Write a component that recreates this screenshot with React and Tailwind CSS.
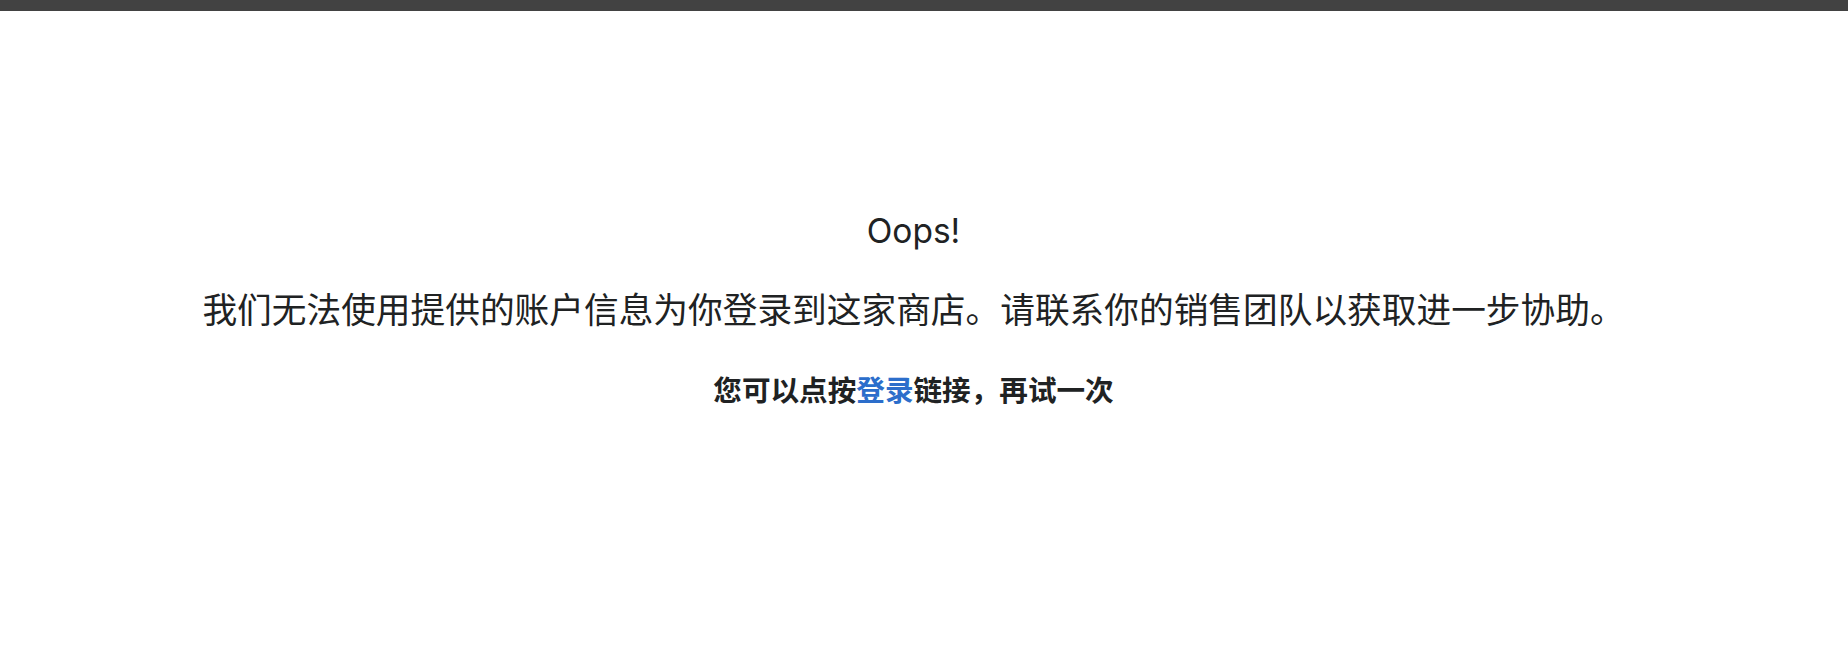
/**
 * Login error page: dark top strip and a centred message block.
 */
const App = () => {
  return (
    <div
      className="min-h-[670px] bg-white text-[#202223]"
      style={{ fontFamily: 'Inter, "Noto Sans CJK SC", sans-serif' }}
    >
      <div className="h-[11px] bg-[#424242]" />

      <main className="mt-[196px] flex flex-col items-center pr-[21px] text-center">
        <h1 className="text-[33.5px] font-normal leading-[48px]">Oops!</h1>

        <p className="mt-[29px] text-[34.7px] leading-[52px] whitespace-nowrap">
          我们无法使用提供的账户信息为你登录到这家商店。请联系你的销售团队以获取进一步协助。
        </p>

        <p className="mt-[32px] text-[28.6px] font-bold leading-[45px]">
          您可以点按<a href="#" className="text-[#2c6ecb]">登录</a>链接，再试一次
        </p>
      </main>
    </div>
  );
};

export default App;
